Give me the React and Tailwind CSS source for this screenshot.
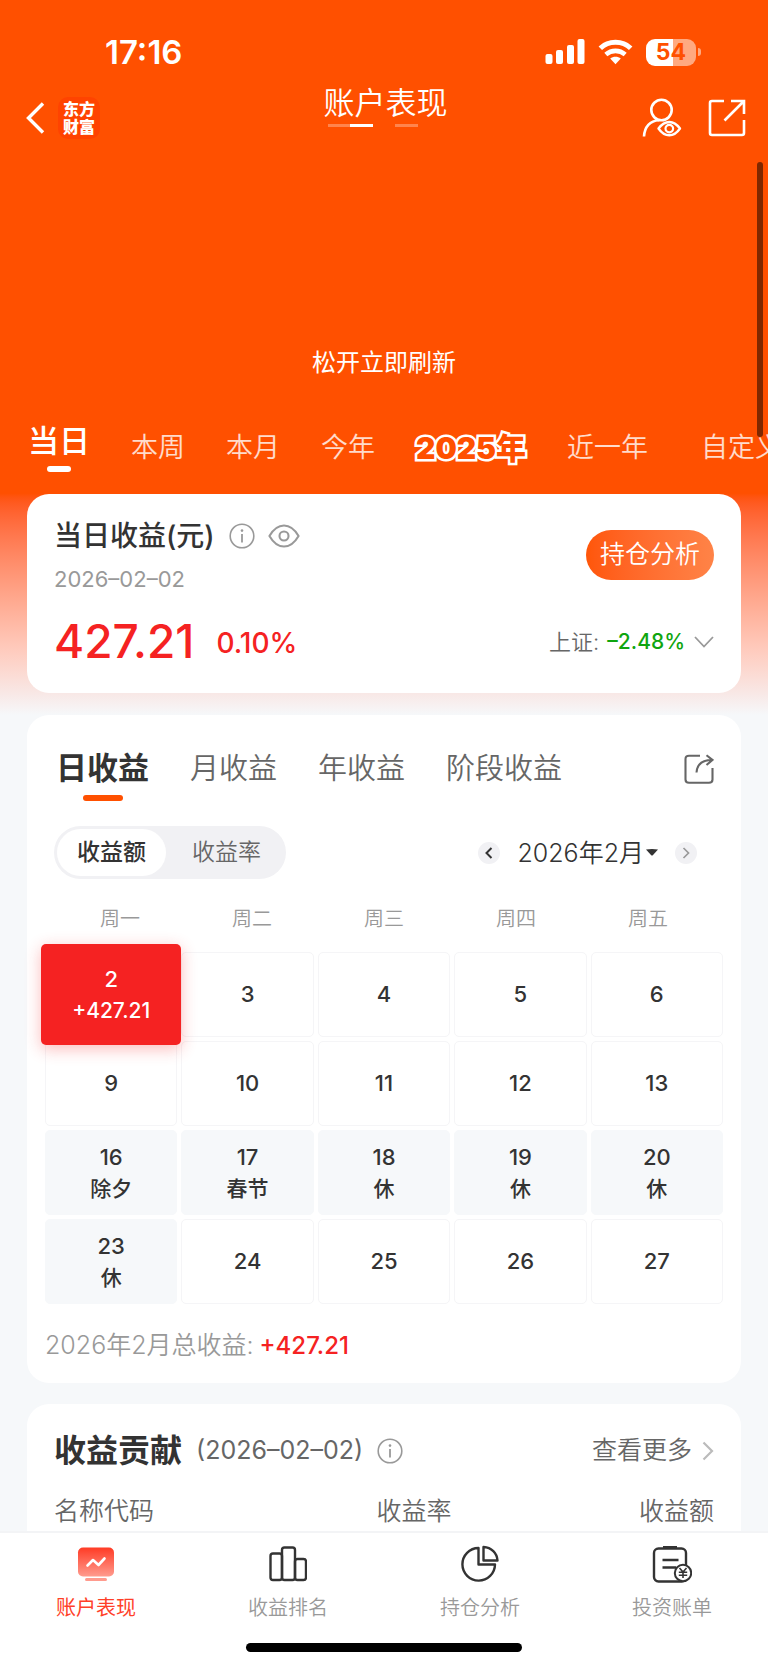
import React, { useState } from "react";

const periods = ["本周", "本月", "今年"];
const profitTabs = ["日收益", "月收益", "年收益", "阶段收益"];
const weekdays = ["周一", "周二", "周三", "周四", "周五"];

const days = [
  { day: 2, profit: "+427.21" },
  { day: 3 },
  { day: 4 },
  { day: 5 },
  { day: 6 },
  { day: 9 },
  { day: 10 },
  { day: 11 },
  { day: 12 },
  { day: 13 },
  { day: 16, rest: "除夕" },
  { day: 17, rest: "春节" },
  { day: 18, rest: "休" },
  { day: 19, rest: "休" },
  { day: 20, rest: "休" },
  { day: 23, rest: "休" },
  { day: 24 },
  { day: 25 },
  { day: 26 },
  { day: 27 },
];

const InfoIcon = () => (
  <svg width="26" height="26" viewBox="0 0 26 26" fill="none" stroke="#999" strokeWidth="1.6">
    <circle cx="13" cy="13" r="11.8" />
    <path d="M13 11v8.5" strokeWidth="1.8" />
    <circle cx="13" cy="7.6" r="1.3" fill="#999" stroke="none" />
  </svg>
);

const EyeIcon = () => (
  <svg width="32" height="26" viewBox="0 0 34 26" fill="none" stroke="#999" strokeWidth="2.2">
    <path d="M1.5 13C5 7 10.500 1.800 17 1.800S29 7 32.500 13C29 19 23.500 24.200 17 24.200S5 19 1.500 13Z" strokeLinejoin="round" />
    <circle cx="17" cy="13" r="4.800" />
  </svg>
);

// 状态栏
const StatusBar = () => (
  <div className="flex h-8 items-center justify-between pl-[105px] pr-[67px]">
    <span className="text-[33px] leading-8 font-semibold">17:16</span>
    <div className="flex items-center gap-[13px]">
      <svg width="40" height="26" viewBox="0 0 40 26" fill="currentColor">
        <rect x="0.500" y="15" width="7" height="10" rx="2" />
        <rect x="11" y="11" width="7" height="14" rx="2" />
        <rect x="22" y="6" width="7" height="19" rx="2" />
        <rect x="32.500" y="0" width="7" height="25" rx="2" />
      </svg>
      <svg width="35" height="26" viewBox="0 0 35 26" fill="none" stroke="currentColor" strokeWidth="5">
        <path d="M2.300 9.200C10.500 1.400 24.500 1.400 32.700 9.200" />
        <path d="M7.800 15.500C13.500 10.600 21.500 10.600 27.200 15.500" strokeWidth="4.600" />
        <path d="M12.200 19.600C15.200 17 19.800 17 22.800 19.600L17.500 25.200Z" fill="currentColor" stroke="none" />
      </svg>
      <div className="flex items-center gap-[2px]">
        <div className="flex h-[27px] w-[50px] items-center justify-center rounded-[9px] bg-linear-to-r from-white from-54% to-[#ffa980] to-54% text-[23px] leading-none font-bold text-[#ff5000]">
          54
        </div>
        <div className="h-2 w-[3px] rounded-r-full bg-[#ffa980]" />
      </div>
    </div>
  </div>
);

const NavBar = () => (
  <div className="mt-[15px] grid grid-cols-[1fr_auto_1fr] items-start pl-[25px] pr-[22px]">
    <div className="flex h-14 items-center gap-[13px] pt-[14px]">
      <button aria-label="返回">
        <svg width="20" height="34" viewBox="0 0 20 34" fill="none" stroke="currentColor" strokeWidth="3.400">
          <path d="M18 2.500 3.500 17 18 31.500" />
        </svg>
      </button>
      <div className="flex size-[42px] flex-col items-center justify-center rounded-[10px] bg-[#ff4300] text-[16px] leading-[18px] font-black">
        <span>东方</span>
        <span>财富</span>
      </div>
    </div>
    <div>
      <h1 className="text-[31px] leading-10 font-[350]">账户表现</h1>
      <div className="flex pt-px pl-1">
        <span className="h-[3px] w-[22px] bg-white/30" />
        <span className="h-[3px] w-[23px] bg-white" />
        <span className="ml-[22px] h-[3px] w-[23px] bg-white/30" />
      </div>
    </div>
    <div className="flex h-14 items-center justify-end gap-[26px] pt-[14px]">
      <button aria-label="账户查看">
        <svg width="40" height="40" viewBox="0 0 40 40" fill="none" stroke="currentColor" strokeWidth="2.600">
          <circle cx="19.500" cy="12" r="10.200" />
          <path d="M2 38.500C2.500 29 8 22.500 17 22.200" />
          <path d="M16.500 30.500C20 25.800 23.500 24 27.300 24S34.500 25.800 38 30.500C34.500 35.500 31 37.300 27.300 37.300S20 35.500 16.500 30.500Z" strokeWidth="2.400" strokeLinejoin="round" />
          <circle cx="27.300" cy="30.600" r="3.800" strokeWidth="2.200" />
        </svg>
      </button>
      <button aria-label="分享">
        <svg width="38" height="38" viewBox="0 0 38 38" fill="none" stroke="currentColor" strokeWidth="2.600">
          <path d="M16 2H4Q2 2 2 4V34Q2 36 4 36H34Q36 36 36 34V21" />
          <path d="M23 2H36V15M36 2 16.500 21.500" />
        </svg>
      </button>
    </div>
  </div>
);

const PeriodTabs = () => (
  <div className="flex items-center gap-[41px] overflow-hidden pl-7 text-[27px] leading-9 font-[350] whitespace-nowrap text-white/80">
    <button className="flex shrink-0 flex-col items-center text-[31px] font-medium text-white">
      当日
      <span className="mt-[7px] h-[6px] w-6 rounded-full bg-white" />
    </button>
    {periods.map((name) => (
      <button key={name} className="shrink-0">
        {name}
      </button>
    ))}
    <button className="shrink-0 text-[30px] font-black text-[#ff5000] [-webkit-text-stroke:5px_white] [paint-order:stroke_fill]">2025年</button>
    <button className="shrink-0">近一年</button>
    <button className="shrink-0 pl-3">自定义</button>
  </div>
);

const SummaryCard = () => (
  <section className="mx-[27px] flex h-[199px] justify-between rounded-[22px] bg-white px-[27px] text-[#333]">
    <div className="pt-6">
      <div className="flex items-center">
        <h2 className="text-[28px] leading-9 font-medium">当日收益(元)</h2>
        <button aria-label="收益说明" className="ml-[14px]">
          <InfoIcon />
        </button>
        <button aria-label="隐藏金额" className="ml-[13px]">
          <EyeIcon />
        </button>
      </div>
      <div className="mt-[9px] text-[22px] leading-8 text-[#999]">2026–02–02</div>
      <div className="mt-[18px] flex items-center gap-[22px] leading-[52px] text-[#f52222]">
        <span className="text-[46px] font-medium">427.21</span>
        <span className="pt-1 text-[28px] font-medium">0.10%</span>
      </div>
    </div>
    <div className="flex flex-col items-end pt-9">
      <button className="h-[50px] rounded-full bg-linear-to-r from-[#ff5608] to-[#ff8347] px-[14px] text-[25px] font-[350] text-white">
        持仓分析
      </button>
      <button className="mt-[46px] flex items-center text-[22px] leading-8">
        <span className="font-[350] text-[#666]">上证:</span>
        <span className="ml-2 text-[21px] font-medium text-[#0fa50f]">–2.48%</span>
        <svg className="ml-[9px]" width="20" height="12" viewBox="0 0 20 12" fill="none" stroke="#999" strokeWidth="1.800">
          <path d="M1 1 10 10.500 19 1" />
        </svg>
      </button>
    </div>
  </section>
);

const CalendarCard = () => {
  const [tab, setTab] = useState("日收益");
  const [selected, setSelected] = useState(2);

  return (
    <section className="mx-[27px] mt-[22px] rounded-[22px] bg-white px-[18px] pt-[33px] pb-[19px] text-[#333]">
      <div className="flex items-start justify-between px-[9px]">
        <div className="flex items-baseline gap-[41px] pl-0.5 text-[29px] leading-10 text-[#666]">
          {profitTabs.map((name) =>
            name === tab ? (
              <button key={name} className="flex flex-col items-center text-[31px] font-bold text-[#333]">
                {name}
                <span className="mt-[7px] h-[6px] w-10 rounded-full bg-[#ff5000]" />
              </button>
            ) : (
              <button key={name} onClick={() => setTab(name)} className="font-[350]">
                {name}
              </button>
            )
          )}
        </div>
        <button aria-label="分享收益" className="pt-[6px]">
          <svg width="30" height="30" viewBox="0 0 30 30" fill="none" stroke="#666" strokeWidth="2.100">
            <path d="M16 1.800H5Q1.500 1.800 1.500 5V25.500Q1.500 28.800 5 28.800H25Q28.500 28.800 28.500 25.500V14" />
            <path d="M12.500 18.500C13 11 18 6 28 6M22.500 1.200 28.500 6 22.500 11" />
          </svg>
        </button>
      </div>

      {/* 金额 / 比率切换 与 月份选择 */}
      <div className="mt-[25px] flex items-center justify-between px-[9px]">
        <div className="flex rounded-full bg-[#f1f1f4] p-[3px] text-[23px] leading-[47px]">
          <button className="rounded-full bg-white px-5 font-medium">收益额</button>
          <button className="pr-[22px] pl-[26px] font-[350] text-[#666]">收益率</button>
        </div>
        <div className="flex items-center pr-[17px]">
          <button aria-label="上个月" className="flex size-[22px] items-center justify-center rounded-full bg-[#f1f1f4]">
            <svg width="8" height="12" viewBox="0 0 8 12" fill="none" stroke="#333" strokeWidth="2">
              <path d="M6.500 1 1.500 6l5 5" />
            </svg>
          </button>
          <button className="mx-[17px] flex items-center gap-[2px] text-[25px] leading-9 font-[350]">
            2026年2月
            <svg width="12" height="7" viewBox="0 0 12 7" fill="#333">
              <path d="M0 .5Q6-.5 12 .5L7 6Q6 7 5 6Z" />
            </svg>
          </button>
          <button aria-label="下个月" className="flex size-[22px] items-center justify-center rounded-full bg-[#f1f1f4]">
            <svg width="8" height="12" viewBox="0 0 8 12" fill="none" stroke="#999" strokeWidth="1.700">
              <path d="m1.500 1 5 5-5 5" />
            </svg>
          </button>
        </div>
      </div>

      <div className="mt-[25px] grid grid-cols-5 px-[9px] text-center text-[20px] leading-[30px] font-[350] text-[#999]">
        {weekdays.map((name) => (
          <span key={name}>{name}</span>
        ))}
      </div>

      <div className="mt-[18px] grid grid-cols-5 gap-1 text-[22px] leading-[31px] font-medium">
        {days.map(({ day, profit, rest }) => (
          <button
            key={day}
            onClick={() => setSelected(day)}
            className={`relative h-[85px] rounded-[5px] border ${rest ? "border-[#f6f8fa] bg-[#f6f8fa]" : "border-[#f5f5f7]"}`}
          >
            {selected === day ? (
              <span className="absolute -inset-x-[5px] -inset-y-[9px] z-10 flex flex-col items-center justify-center rounded-[5px] bg-[#f52222] text-white shadow-[0_4px_16px_rgba(245,34,34,0.3)]">
                <span>{day}</span>
                <span className="text-[21px]">{profit || rest}</span>
              </span>
            ) : (
              <span className="flex flex-col items-center">
                <span>{day}</span>
                {rest && <span className="text-[21px]">{rest}</span>}
              </span>
            )}
          </button>
        ))}
      </div>

      <p className="mt-[23px] text-[25px] leading-9">
        <span className="font-[350] text-[#999]">2026年2月总收益:</span>
        <span className="ml-1.5 text-[24px] font-medium text-[#f52222]">+427.21</span>
      </p>
    </section>
  );
};

const ContributionCard = () => (
  <section className="mx-[27px] mt-[21px] flex-1 rounded-t-[22px] bg-white px-[27px] pt-[27px] text-[#333]">
    <div className="flex items-center justify-between">
      <div className="flex items-center">
        <h2 className="text-[32px] leading-10 font-bold">收益贡献</h2>
        <span className="ml-[14px] text-[25px] text-[#666]">(2026–02–02)</span>
        <button aria-label="贡献说明" className="ml-[14px]">
          <InfoIcon />
        </button>
      </div>
      <a href="#more" className="flex items-center gap-2.5 text-[25px] font-[350] text-[#666]">
        查看更多
        <svg width="12" height="20" viewBox="0 0 12 20" fill="none" stroke="#bbb" strokeWidth="2.200">
          <path d="m1.500 1.500 8.500 8.500-8.500 8.500" />
        </svg>
      </a>
    </div>
    <table className="mt-[22px] w-full table-fixed text-[25px] leading-9 text-[#666]">
      <thead>
        <tr>
          <th className="text-left font-[350]">名称代码</th>
          <th className="pl-[60px] text-center font-[350]">收益率</th>
          <th className="text-right font-[350]">收益额</th>
        </tr>
      </thead>
    </table>
  </section>
);

const TabBar = () => (
  <footer className="sticky bottom-0 z-20 border-t-2 border-[#f3f4f6] bg-white pb-[14px]">
    <nav className="grid grid-cols-4 text-[20px] leading-7 font-[350] text-[#999]">
      <a href="#account" className="flex flex-col items-center gap-[11px] pt-3 font-normal text-[#ff3f29]">
        <svg width="38" height="38" viewBox="0 0 38 38" fill="none">
          <defs>
            <linearGradient id="screen" x1="0" y1="0" x2="0" y2="1">
              <stop offset="0" stopColor="#ff3b25" />
              <stop offset="1" stopColor="#ff9b8e" />
            </linearGradient>
          </defs>
          <rect x="1" y="2.500" width="36" height="29" rx="5" fill="url(#screen)" />
          <rect x="8" y="33" width="22" height="3" rx="1.500" fill="#ff9b8e" />
          <path d="m10.500 20.500 5.500-5.500 5.500 5 6-6.500" stroke="#fff" strokeWidth="2.600" strokeLinecap="round" strokeLinejoin="round" />
        </svg>
        账户表现
      </a>
      <a href="#rank" className="flex flex-col items-center gap-[11px] pt-3">
        <svg width="38" height="38" viewBox="0 0 38 38" fill="none" stroke="#333" strokeWidth="2.400">
          <rect x="1.500" y="8.500" width="11.500" height="26.500" rx="2.500" />
          <rect x="13" y="2.500" width="13" height="32.500" rx="2.500" />
          <rect x="26" y="14" width="11" height="21" rx="2.500" />
        </svg>
        收益排名
      </a>
      <a href="#position" className="flex flex-col items-center gap-[11px] pt-3">
        <svg width="38" height="38" viewBox="0 0 38 38" fill="none" stroke="#333" strokeWidth="2.400" strokeLinejoin="round">
          <path d="M17.500 3A16.300 16.300 0 1 0 34 19.500H17.500Z" />
          <path d="M22.500 2V15.500H36.500C36 8 30.500 2.500 22.500 2Z" />
        </svg>
        持仓分析
      </a>
      <a href="#bill" className="flex flex-col items-center gap-[11px] pt-3">
        <svg width="40" height="38" viewBox="0 0 40 38" fill="none" stroke="#333" strokeWidth="2.400">
          <rect x="2" y="3.500" width="32" height="33" rx="4.500" />
          <path d="M11 2.500H25" strokeWidth="3" />
          <path d="M10.500 15H26.500M10.500 22.500H24" strokeWidth="2.600" />
          <circle cx="31" cy="28" r="8.200" fill="#fff" strokeWidth="2" />
          <path d="m27.500 23 3.500 4 3.500-4M31 27v6M26.800 27.200h8.400M26.800 30.200h8.400" strokeWidth="1.600" />
        </svg>
        投资账单
      </a>
    </nav>
    <div className="mx-auto mt-[21px] h-[9px] w-[36%] rounded-full bg-black" />
  </footer>
);

const App = () => (
  <div className="relative flex min-h-screen flex-col overflow-x-clip bg-[#f6f8fa] font-['Inter','Noto_Sans_CJK_SC',sans-serif]">
    <header className="bg-linear-to-b from-[#ff5000] from-69% via-[#f8e8e6] via-97% to-[#f6f8fa] pt-9 pb-[22px] text-white">
      <StatusBar />
      <NavBar />
      <p className="pt-[206px] text-center text-[24px] leading-9">松开立即刷新</p>
      <div className="mt-[42px] mb-[22px]">
        <PeriodTabs />
      </div>
      <SummaryCard />
    </header>
    <main className="-mt-[22px] flex flex-1 flex-col">
      <CalendarCard />
      <ContributionCard />
    </main>
    <TabBar />
    {/* 滚动条 */}
    <div className="absolute top-[162px] right-[5px] h-[275px] w-[6px] rounded-full bg-black/50" />
  </div>
);

export default App;
